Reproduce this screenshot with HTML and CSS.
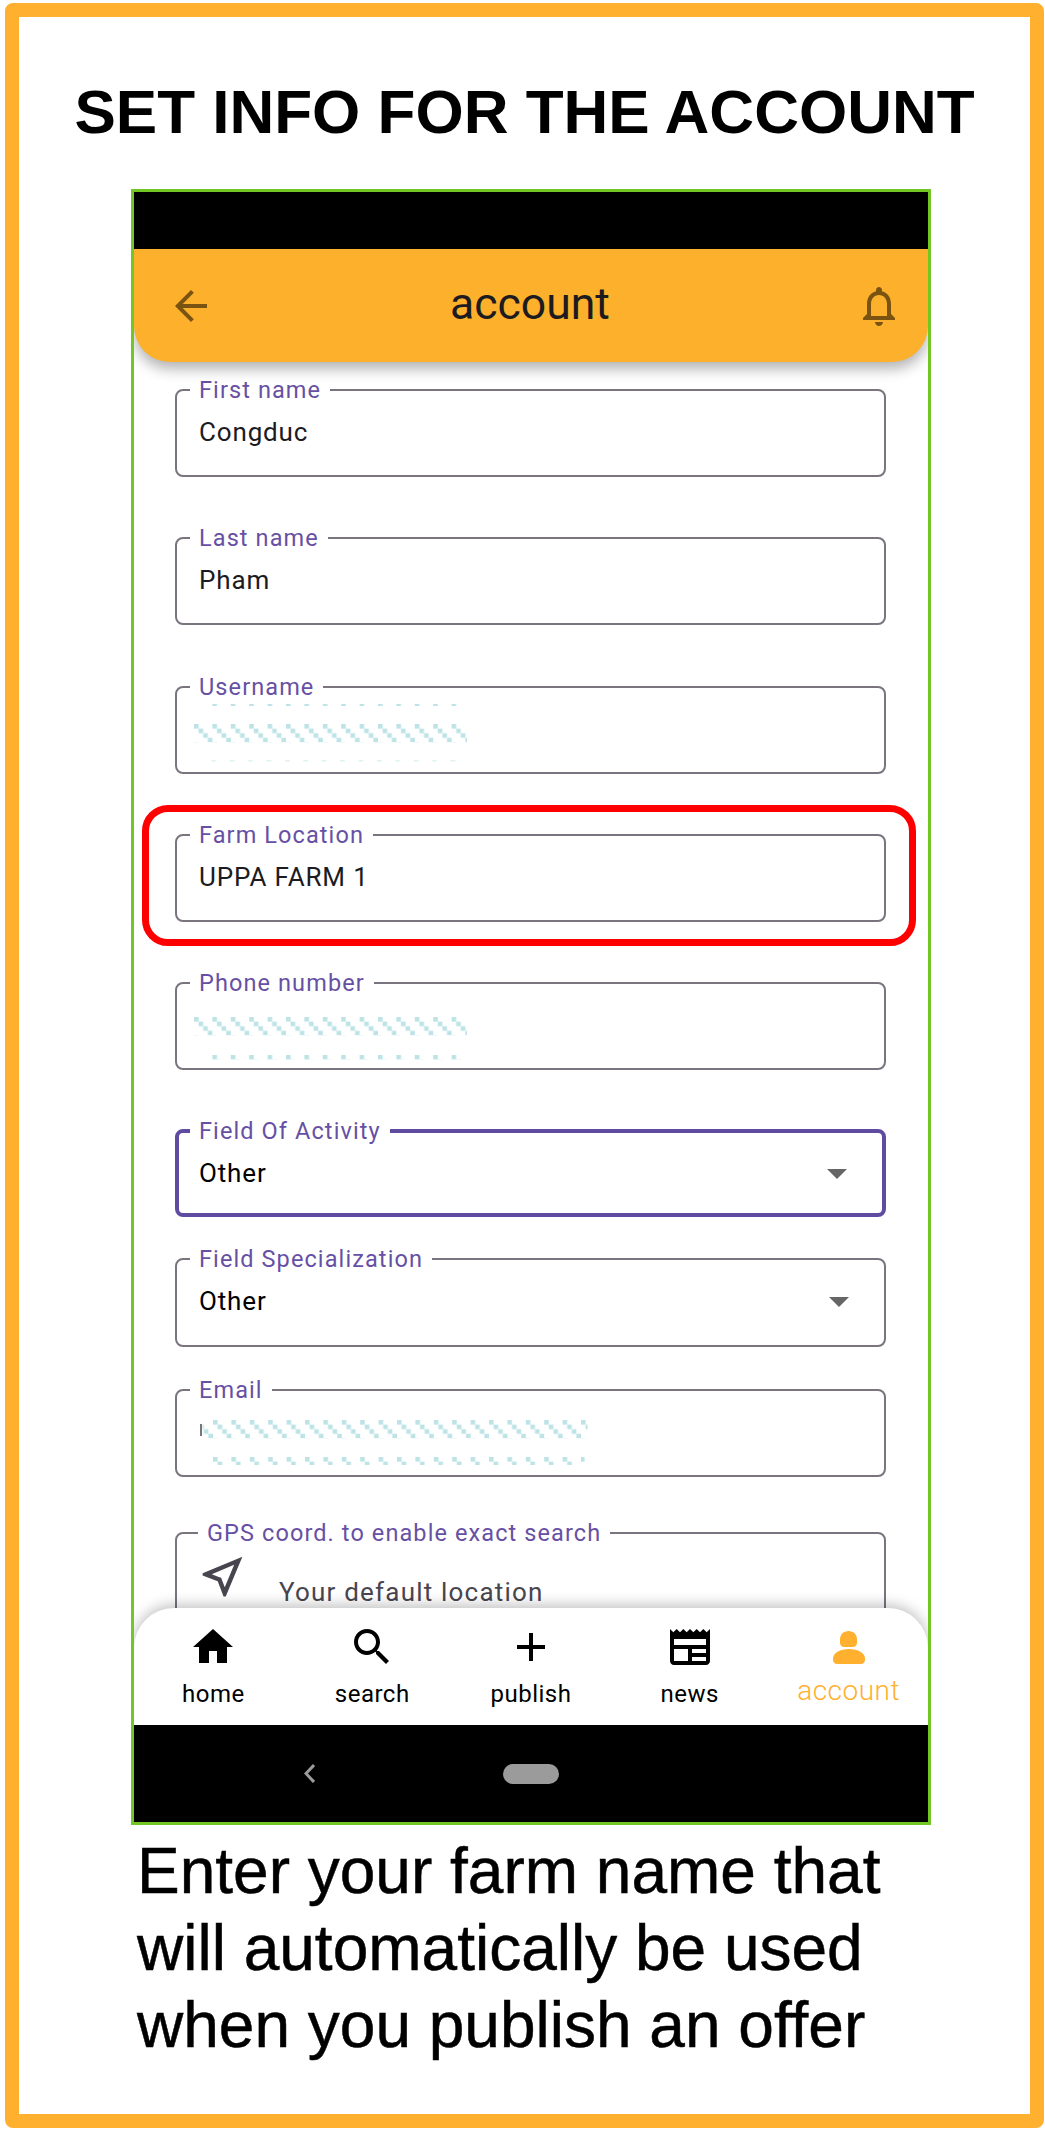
FILE: index.html
```html
<!DOCTYPE html>
<html lang="en">
  <head>
    <meta charset="UTF-8" />
    <meta name="viewport" content="width=device-width, initial-scale=1.0" />
    <title>Set info for the account</title>
    <link rel="stylesheet" href="styles.css">
  </head>
  <body>
    <!-- shared pattern for the blurred out values -->
    <svg class="defs" width="0" height="0">
      <defs>
        <pattern id="redact" width="18.4" height="18.4" patternUnits="userSpaceOnUse">
          <rect x="0" y="0" width="4.6" height="4.6" />
          <rect x="4.6" y="4.6" width="4.6" height="4.6" />
          <rect x="9.2" y="9.2" width="4.6" height="4.6" />
          <rect x="13.8" y="13.8" width="4.6" height="4.6" />
        </pattern>
      </defs>
    </svg>

    <div class="frame">
      <h1 class="title">SET INFO FOR THE ACCOUNT</h1>

      <div class="phone">
        <div class="status-bar"></div>

        <header class="app-bar">
          <svg class="icon" viewBox="0 0 24 24"><path d="M20 11H7.83l5.59-5.59L12 4l-8 8 8 8 1.41-1.41L7.83 13H20v-2z" /></svg>
          <span class="app-bar__title">account</span>
          <svg class="icon" viewBox="0 0 24 24"><path d="M12 22c1.1 0 2-.9 2-2h-4c0 1.1.9 2 2 2zm6-6v-5c0-3.07-1.63-5.64-4.5-6.32V4c0-.83-.67-1.5-1.5-1.5s-1.5.67-1.5 1.5v.68C7.64 5.36 6 7.92 6 11v5l-2 2v1h16v-1l-2-2zm-2 1H8v-6c0-2.48 1.51-4.5 4-4.5s4 2.02 4 4.5v6z" /></svg>
        </header>

        <main class="form">
          <fieldset class="field">
            <legend>First name</legend>
            <div class="field__value">Congduc</div>
          </fieldset>

          <fieldset class="field">
            <legend>Last name</legend>
            <div class="field__value">Pham</div>
          </fieldset>

          <fieldset class="field">
            <legend>Username</legend>
            <svg class="redacted" width="420" height="70">
              <g transform="translate(0 4)"><rect x="12" width="258" height="2" fill="url(#redact)" /></g>
              <g transform="translate(0 24)"><rect width="273" height="18.4" fill="url(#redact)" /></g>
              <g transform="translate(-1 60)" opacity="0.5"><rect x="18" width="258" height="1.5" fill="url(#redact)" /></g>
            </svg>
          </fieldset>

          <div class="highlight">
            <fieldset class="field field--flush">
              <legend>Farm Location</legend>
              <div class="field__value">UPPA FARM 1</div>
            </fieldset>
          </div>

          <fieldset class="field field--before-focus">
            <legend>Phone number</legend>
            <svg class="redacted" width="420" height="70">
              <g transform="translate(0 21)"><rect width="273" height="18.4" fill="url(#redact)" /></g>
              <g transform="translate(0 59)"><rect x="18" width="258" height="4.6" fill="url(#redact)" /></g>
            </svg>
          </fieldset>

          <fieldset class="field field--focused">
            <legend>Field Of Activity</legend>
            <div class="field__value field__value--select">
              <span>Other</span>
              <span class="caret"></span>
            </div>
          </fieldset>

          <fieldset class="field field--select">
            <legend>Field Specialization</legend>
            <div class="field__value field__value--select">
              <span>Other</span>
              <span class="caret"></span>
            </div>
          </fieldset>

          <fieldset class="field field--before-gps">
            <legend>Email</legend>
            <svg class="redacted" width="420" height="70">
              <rect class="redacted__cursor" x="6" y="21" width="2" height="12" />
              <g transform="translate(0.6 17)"><rect x="8" width="385" height="18.4" fill="url(#redact)" /></g>
              <g transform="translate(0.6 54)"><rect x="18" width="372" height="8" fill="url(#redact)" /></g>
            </svg>
          </fieldset>

          <fieldset class="field field--gps">
            <legend>GPS coord. to enable exact search</legend>
            <div class="gps">
              <svg class="gps__icon" viewBox="0 0 24 24"><path d="M17.27 6.73l-4.24 10.13-1.32-3.42-.32-.83-.82-.32-3.43-1.33 10.13-4.23M21 3L3 10.53v.98l6.84 2.65L12.48 21h.98L21 3z" /></svg>
              <span class="gps__text">Your default location</span>
            </div>
          </fieldset>
        </main>

        <nav class="tabs">
          <div class="tab">
            <svg class="icon" viewBox="0 0 24 24"><path d="M10 20v-6h4v6h5v-8h3L12 3 2 12h3v8z" /></svg>
            <span>home</span>
          </div>
          <div class="tab">
            <svg class="icon" viewBox="0 0 24 24"><path d="M15.5 14h-.79l-.28-.27C15.41 12.59 16 11.11 16 9.5 16 5.91 13.09 3 9.5 3S3 5.91 3 9.5 5.91 16 9.5 16c1.61 0 3.09-.59 4.23-1.57l.27.28v.79l5 4.99L20.49 19l-4.99-5zm-6 0C7.01 14 5 11.99 5 9.5S7.01 5 9.5 5 14 7.01 14 9.5 11.99 14 9.5 14z" /></svg>
            <span>search</span>
          </div>
          <div class="tab">
            <svg class="icon" viewBox="0 0 24 24"><path d="M19 13h-6v6h-2v-6H5v-2h6V5h2v6h6v2z" /></svg>
            <span>publish</span>
          </div>
          <div class="tab">
            <svg class="icon" viewBox="0 0 24 24"><path d="M22 3l-1.67 1.67L18.67 3 17 4.67 15.33 3l-1.66 1.67L12 3l-1.67 1.67L8.67 3 7 4.67 5.33 3 3.67 4.67 2 3v16c0 1.1.9 2 2 2h16c1.1 0 2-.9 2-2V3zM11 19H4v-6h7v6zm9 0h-7v-2h7v2zm0-4h-7v-2h7v2zm0-4H4V8h16v3z" /></svg>
            <span>news</span>
          </div>
          <div class="tab tab--active">
            <svg class="icon" viewBox="0 0 48 48">
              <path d="M23.5 8c4.7 0 8.5 3.6 8.5 8v4c0 2.2-1.8 4-4 4h-9c-2.2 0-4-1.8-4-4v-4c0-4.400 3.800-8 8.500-8z" />
              <path d="M24 26c9 0 16 4 16 9.500V37c0 2.200-1.800 4-4 4H12c-2.200 0-4-1.800-4-4v-1.500C8 30 15 26 24 26z" />
            </svg>
            <span>account</span>
          </div>
        </nav>

        <div class="system-bar">
          <svg class="system-bar__back" viewBox="0 0 11 19"><path d="M10 1 2 9.500l8 8.500" /></svg>
          <span class="system-bar__pill"></span>
        </div>
      </div>

      <p class="caption">Enter your farm name that<br />will automatically be used<br />when you publish an offer</p>
    </div>
  </body>
</html>
```

FILE: styles.css
```css
html,
body {
  margin: 0;
  padding: 0;
  background: #fff;
}
.defs {
  position: absolute;
}
#redact {
  fill: #bde3e6;
}
.frame {
  box-sizing: border-box;
  width: 1039px;
  height: 2125px;
  margin: 3px 0 0 5px;
  border: 14px solid #ffb02e;
  border-radius: 8px;
  font-family: "Liberation Sans", Arial, sans-serif;
  color: #000;
  overflow: hidden;
}
.title {
  margin: 0;
  height: 172px;
  box-sizing: border-box;
  padding-top: 60px;
  font-size: 62px;
  line-height: 70px;
  font-weight: 700;
  text-align: center;
  white-space: nowrap;
}
.phone {
  box-sizing: border-box;
  width: 800px;
  height: 1636px;
  margin-left: 112px;
  border: 3px solid #72c725;
  display: flex;
  flex-direction: column;
  overflow: hidden;
  font-family: Roboto, sans-serif;
}
.status-bar {
  flex: none;
  height: 57px;
  background: #000;
}
.app-bar {
  flex: none;
  position: relative;
  z-index: 2;
  height: 113px;
  padding: 0 25px 0 33px;
  box-sizing: border-box;
  display: flex;
  align-items: center;
  justify-content: space-between;
  background: #fcb02b;
  border-radius: 0 0 36px 36px;
  box-shadow: 0 7px 14px rgba(0, 0, 0, 0.3);
}
.app-bar .icon {
  fill: #7a5310;
}
.app-bar__title {
  margin: 0 10px 4px 0;
  font-size: 44.5px;
  color: #1c1b1f;
}
.icon {
  display: block;
  width: 48px;
  height: 48px;
}
.form {
  flex: 1 1 0;
  min-height: 0;
  overflow: hidden;
  padding: 15px 42px 0 41px;
  margin-bottom: -40px;
  background: #fff;
}
.field {
  box-sizing: border-box;
  height: 100px;
  margin: 0 0 48.25px;
  padding: 0 0 0 13px;
  min-width: 0;
  border: 2px solid #79747e;
  border-radius: 8px;
}
.field legend {
  padding: 0 9px;
  font-size: 23.5px;
  line-height: 26px;
  letter-spacing: 1.1px;
  color: #6750a4;
}
.field__value {
  padding-left: 9px;
  font-size: 26px;
  line-height: 59px;
  letter-spacing: 0.85px;
  color: #1c1b1f;
}
.field__value--select {
  display: flex;
  align-items: center;
  justify-content: space-between;
  padding-right: 35px;
  color: #000;
}
.caret {
  width: 0;
  height: 0;
  border-style: solid;
  border-width: 10px 10px 0;
  border-color: #666 transparent transparent;
}
.field--flush {
  margin: 0;
}
.field--before-focus {
  margin-bottom: 48px;
}
.field--focused {
  height: 99px;
  margin-bottom: 29px;
  padding-left: 11px;
  border: 4px solid #5f4b9f;
}
.field--select {
  height: 101px;
  margin-bottom: 30px;
}
.field--before-gps {
  margin-bottom: 43px;
}
.field--gps {
  height: 220px;
  margin-bottom: 0;
}
.field--gps legend {
  margin-left: 8px;
}
.highlight {
  margin: -17px -30px 24.25px -33px;
  padding: 10px 23px 17px 26px;
  border: 7px solid #f00;
  border-radius: 26px;
}
.redacted {
  display: block;
  margin-left: 4px;
}
.redacted__cursor {
  fill: #777;
}
.gps {
  display: flex;
  align-items: flex-start;
}
.gps__icon {
  flex: none;
  width: 53px;
  height: 53px;
  margin: 4px 0 0 6px;
  fill: #49454f;
}
.gps__text {
  margin: 30px 0 0 30px;
  font-size: 26px;
  line-height: 32px;
  letter-spacing: 1.2px;
  color: #49454f;
}
.tabs {
  flex: none;
  position: relative;
  z-index: 2;
  height: 117px;
  box-sizing: border-box;
  padding-top: 15px;
  display: grid;
  grid-template-columns: repeat(5, 1fr);
  background: #fff;
  border-radius: 40px 40px 0 0;
  box-shadow: 0 -3px 14px rgba(0, 0, 0, 0.25);
}
.tab {
  display: flex;
  flex-direction: column;
  align-items: center;
  font-size: 24px;
  line-height: 30px;
  letter-spacing: 0.5px;
  color: #000;
}
.tab .icon {
  margin-bottom: 8px;
  fill: #000;
}
.tab--active {
  font-size: 28px;
  font-weight: 300;
  color: #ffb02e;
}
.tab--active .icon {
  margin-bottom: 5px;
  fill: #ffb02e;
}
.system-bar {
  flex: none;
  height: 97px;
  position: relative;
  z-index: 3;
  display: flex;
  align-items: center;
  padding-left: 170px;
  background: #000;
}
.system-bar__back {
  width: 11px;
  height: 19px;
  fill: none;
  stroke: #9b9b9b;
  stroke-width: 3px;
}
.system-bar__pill {
  width: 56px;
  height: 20px;
  margin-left: 188px;
  border-radius: 10px;
  background: #9b9b9b;
}
.caption {
  margin: 8px 0 0 118px;
  font-size: 64px;
  line-height: 77px;
  white-space: nowrap;
  -webkit-text-stroke: 0.5px #000;
}
```
